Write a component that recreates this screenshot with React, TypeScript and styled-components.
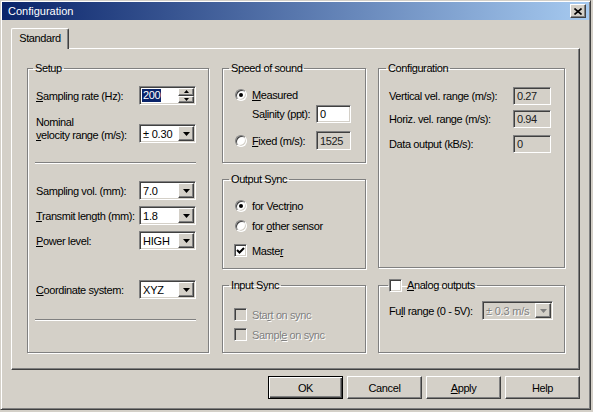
import React from "react";
import styled, { createGlobalStyle, css } from "styled-components";

const Global = createGlobalStyle`
  html, body {
    margin: 0;
    padding: 0;
    background: #d4d0c8;
  }
  body {
    font-family: "Liberation Sans", Arial, sans-serif;
    font-size: 11px;
    letter-spacing: -0.4px;
    color: #000;
  }
  * {
    box-sizing: border-box;
  }
`;

const sunken = css`
  border: 1px solid;
  border-color: #808080 #fff #fff #808080;
  box-shadow: inset 1px 1px #404040, inset -1px -1px #d4d0c8;
`;

const raised = css`
  border: 1px solid;
  border-color: #fff #404040 #404040 #fff;
  box-shadow: inset -1px -1px #808080;
  background: #d4d0c8;
`;

const Window = styled.div`
  width: 591px;
  height: 410px;
  background: #d4d0c8;
  border: 1px solid;
  border-color: #d4d0c8 #404040 #404040 #d4d0c8;
  box-shadow: inset 1px 1px #fff, inset -1px -1px #808080;
  padding: 1px;
  display: flex;
  flex-direction: column;
`;

const TitleBar = styled.div`
  height: 18px;
  display: flex;
  align-items: center;
  justify-content: space-between;
  padding: 0 3px 0 6px;
  background: linear-gradient(to right, #0a246a, #a6caf0);
  color: #fff;
  letter-spacing: 0;
`;

const CloseButton = styled.div`
  ${raised};
  width: 16px;
  height: 14px;
  display: flex;
  align-items: center;
  justify-content: center;
`;

const Body = styled.div`
  padding: 8px 9px 0 9px;
  display: flex;
  flex-direction: column;
`;

const TabStrip = styled.div`
  height: 20px;
  display: flex;
  align-items: flex-end;
`;

const Tab = styled.div`
  position: relative;
  z-index: 1;
  width: 58px;
  height: 21px;
  margin-bottom: -1px;
  padding-top: 3px;
  text-align: center;
  background: #d4d0c8;
  border-top: 1px solid #fff;
  border-left: 1px solid #fff;
  border-right: 1px solid #404040;
  border-radius: 2px 2px 0 0;
  box-shadow: inset -1px 0 #808080;
`;

const Panel = styled.div`
  height: 322px;
  border: 1px solid;
  border-color: #fff #404040 #404040 #fff;
  box-shadow: inset -1px -1px #808080;
  padding: 13px 0 0 15px;
  display: flex;
`;

const Column = styled.div<{ $w: number; $ml?: number }>`
  width: ${(p) => p.$w}px;
  margin-left: ${(p) => p.$ml ?? 0}px;
  display: flex;
  flex-direction: column;
`;

const Group = styled.fieldset<{ $h: number; $pl: number; $pr: number; $mt?: number }>`
  margin: ${(p) => p.$mt ?? 0}px 0 0 0;
  min-width: 0;
  height: ${(p) => p.$h}px;
  padding: 0 ${(p) => p.$pr}px 0 ${(p) => p.$pl}px;
  border: 1px solid #808080;
  box-shadow: inset 1px 1px #fff, 1px 1px 0 #fff;
`;

const Legend = styled.legend<{ $ml?: number }>`
  padding: 0 2px;
  margin-left: ${(p) => p.$ml ?? -3}px;
  height: 13px;
  line-height: 13px;
  display: flex;
  align-items: center;
  gap: 5px;
`;

const Row = styled.div<{ $mt: number; $h?: number; $pl?: number }>`
  margin-top: ${(p) => p.$mt}px;
  height: ${(p) => p.$h ?? 19}px;
  padding-left: ${(p) => p.$pl ?? 0}px;
  display: flex;
  align-items: center;
  justify-content: space-between;
`;

const StackLabel = styled.div`
  line-height: 13px;
  align-self: flex-end;
  margin-bottom: 1px;
`;

const Label = styled.span<{ $off?: boolean }>`
  flex: 1;
  white-space: nowrap;
  color: ${(p) => (p.$off ? "#808080" : "#000")};
  text-shadow: ${(p) => (p.$off ? "1px 1px 0 #fff" : "none")};
`;

const Key = styled.span`
  text-decoration: underline;
`;

const Slot = styled.span`
  width: 17px;
  flex: none;
  display: flex;
  align-items: center;
`;

const Separator = styled.div<{ $mt: number }>`
  margin: ${(p) => p.$mt}px 0 0 -1px;
  height: 2px;
  border-top: 1px solid #808080;
  border-bottom: 1px solid #fff;
`;

const Field = styled.div<{ $w: number; $h?: number; $ro?: boolean }>`
  ${sunken};
  width: ${(p) => p.$w}px;
  height: ${(p) => p.$h ?? 18}px;
  flex: none;
  background: ${(p) => (p.$ro ? "#d4d0c8" : "#fff")};
  color: ${(p) => (p.$ro ? "#202020" : "#000")};
  padding: 0 2px 0 3px;
  display: flex;
  align-items: center;
`;

const ComboBox = styled.div<{ $w: number; $off?: boolean }>`
  ${sunken};
  width: ${(p) => p.$w}px;
  height: 19px;
  flex: none;
  padding: 1px;
  display: flex;
  background: ${(p) => (p.$off ? "#d4d0c8" : "#fff")};
`;

const ComboText = styled.span<{ $off?: boolean }>`
  flex: 1;
  padding-left: 2px;
  display: flex;
  align-items: center;
  white-space: nowrap;
  letter-spacing: -0.2px;
  color: ${(p) => (p.$off ? "#808080" : "#000")};
  text-shadow: ${(p) => (p.$off ? "1px 1px 0 #fff" : "none")};
`;

const ArrowButton = styled.span`
  ${raised};
  width: 16px;
  height: 15px;
  display: flex;
  align-items: center;
  justify-content: center;
`;

const SpinBox = styled.div`
  ${sunken};
  width: 57px;
  height: 19px;
  padding: 1px 1px 1px 2px;
  display: flex;
  align-items: center;
  background: #fff;
`;

const Selected = styled.span`
  background: #0a246a;
  color: #fff;
  height: 13px;
  line-height: 13px;
  padding: 0 1px;
`;

const SpinButtons = styled.span`
  margin-left: auto;
  width: 16px;
  height: 15px;
  display: flex;
  flex-direction: column;
`;

const SpinHalf = styled.span`
  ${raised};
  flex: 1;
  display: flex;
  align-items: center;
  justify-content: center;
`;

const Radio = styled.span<{ $on?: boolean }>`
  width: 12px;
  height: 12px;
  border-radius: 50%;
  background: #fff;
  border: 1px solid;
  border-color: #808080 #fff #fff #808080;
  box-shadow: inset 1px 1px #404040, inset -1px -1px #d4d0c8;
  display: flex;
  align-items: center;
  justify-content: center;

  &::after {
    content: "";
    width: 4px;
    height: 4px;
    border-radius: 50%;
    background: #000;
    display: ${(p) => (p.$on ? "block" : "none")};
  }
`;

const Check = styled.span<{ $off?: boolean }>`
  ${sunken};
  width: 13px;
  height: 13px;
  flex: none;
  margin-left: -1px;
  background: ${(p) => (p.$off ? "#d4d0c8" : "#fff")};
  display: flex;
  align-items: center;
  justify-content: center;
`;

const ButtonRow = styled.div`
  margin-top: 6px;
  display: flex;
  justify-content: flex-end;
  gap: 4px;
`;

const Button = styled.div<{ $default?: boolean }>`
  width: 75px;
  height: 23px;
  display: flex;
  align-items: center;
  justify-content: center;
  background: #d4d0c8;
  border: 1px solid;
  border-color: ${(p) => (p.$default ? "#000" : "#fff #404040 #404040 #fff")};
  box-shadow: ${(p) =>
    p.$default
      ? "inset 1px 1px #fff, inset -1px -1px #404040, inset -2px -2px #808080"
      : "inset -1px -1px #808080"};
`;

function Arrow({ off }: { off?: boolean }) {
  return (
    <svg width="7" height="4" viewBox="0 0 7 4">
      <polygon points="0,0 7,0 3.5,4" fill={off ? "#808080" : "#000"} />
    </svg>
  );
}

function Combo({ value, w, off }: { value: string; w: number; off?: boolean }) {
  return (
    <ComboBox $w={w} $off={off}>
      <ComboText $off={off}>{value}</ComboText>
      <ArrowButton>
        <Arrow off={off} />
      </ArrowButton>
    </ComboBox>
  );
}

function Tick() {
  return (
    <svg width="9" height="9" viewBox="0 0 9 9">
      <polyline points="1,4 3.5,6.5 8,2" fill="none" stroke="#000" strokeWidth="2" />
    </svg>
  );
}

export default function App() {
  return (
    <>
      <Global />
      <Window>
        <TitleBar>
          <span>Configuration</span>
          <CloseButton>
            <svg width="8" height="7" viewBox="0 0 8 7">
              <path d="M0.5 0.5 L7.5 6.5 M7.5 0.5 L0.5 6.5" stroke="#000" strokeWidth="1.6" />
            </svg>
          </CloseButton>
        </TitleBar>
        <Body>
          <TabStrip>
            <Tab>Standard</Tab>
          </TabStrip>
          <Panel>
            <Column $w={182}>
              <Group $h={291} $pl={8} $pr={12}>
                <Legend>Setup</Legend>
                <Row $mt={11}>
                  <Label>
                    <Key>S</Key>ampling rate (Hz):
                  </Label>
                  <SpinBox>
                    <Selected>200</Selected>
                    <SpinButtons>
                      <SpinHalf>
                        <svg width="5" height="3" viewBox="0 0 5 3">
                          <polygon points="2.5,0 5,3 0,3" fill="#000" />
                        </svg>
                      </SpinHalf>
                      <SpinHalf>
                        <svg width="5" height="3" viewBox="0 0 5 3">
                          <polygon points="0,0 5,0 2.5,3" fill="#000" />
                        </svg>
                      </SpinHalf>
                    </SpinButtons>
                  </SpinBox>
                </Row>
                <Row $mt={12} $h={26}>
                  <StackLabel>
                    Nominal
                    <br />
                    <Key>v</Key>elocity range (m/s):
                  </StackLabel>
                  <div style={{ alignSelf: "flex-end" }}>
                    <Combo value="± 0.30" w={57} />
                  </div>
                </Row>
                <Separator $mt={19} />
                <Row $mt={17}>
                  <Label>Sampling vol. (mm):</Label>
                  <Combo value="7.0" w={57} />
                </Row>
                <Row $mt={6}>
                  <Label>
                    <Key>T</Key>ransmit length (mm):
                  </Label>
                  <Combo value="1.8" w={57} />
                </Row>
                <Row $mt={6}>
                  <Label>
                    <Key>P</Key>ower level:
                  </Label>
                  <Combo value="HIGH" w={57} />
                </Row>
                <Row $mt={30}>
                  <Label>
                    <Key>C</Key>oordinate system:
                  </Label>
                  <Combo value="XYZ" w={57} />
                </Row>
                <Separator $mt={20} />
              </Group>
            </Column>

            <Column $w={144} $ml={13}>
              <Group $h={101} $pl={9} $pr={14}>
                <Legend>Speed of sound</Legend>
                <Row $mt={13} $h={13} $pl={3}>
                  <Slot>
                    <Radio $on />
                  </Slot>
                  <Label>
                    <Key>M</Key>easured
                  </Label>
                </Row>
                <Row $mt={4} $h={18} $pl={3}>
                  <Slot />
                  <Label>
                    Sa<Key>l</Key>inity (ppt):
                  </Label>
                  <Field $w={35}>0</Field>
                </Row>
                <Row $mt={8} $h={19} $pl={3}>
                  <Slot>
                    <Radio />
                  </Slot>
                  <Label>
                    <Key>F</Key>ixed (m/s):
                  </Label>
                  <Field $w={35} $h={19} $ro>
                    1525
                  </Field>
                </Row>
              </Group>

              <Group $h={96} $pl={9} $pr={14} $mt={10}>
                <Legend>Output Sync</Legend>
                <Row $mt={13} $h={13} $pl={3}>
                  <Slot>
                    <Radio $on />
                  </Slot>
                  <Label>
                    for Vectr<Key>i</Key>no
                  </Label>
                </Row>
                <Row $mt={7} $h={13} $pl={3}>
                  <Slot>
                    <Radio />
                  </Slot>
                  <Label>
                    for <Key>o</Key>ther sensor
                  </Label>
                </Row>
                <Row $mt={12} $h={13} $pl={3}>
                  <Slot>
                    <Check>
                      <Tick />
                    </Check>
                  </Slot>
                  <Label>
                    Maste<Key>r</Key>
                  </Label>
                </Row>
              </Group>

              <Group $h={74} $pl={9} $pr={14} $mt={10}>
                <Legend>Input Sync</Legend>
                <Row $mt={16} $h={13} $pl={3}>
                  <Slot>
                    <Check $off />
                  </Slot>
                  <Label $off>
                    Sta<Key>r</Key>t on sync
                  </Label>
                </Row>
                <Row $mt={7} $h={13} $pl={3}>
                  <Slot>
                    <Check $off />
                  </Slot>
                  <Label $off>
                    Sampl<Key>e</Key> on sync
                  </Label>
                </Row>
              </Group>
            </Column>

            <Column $w={187} $ml={12}>
              <Group $h={206} $pl={10} $pr={13}>
                <Legend>Configuration</Legend>
                <Row $mt={12} $h={18}>
                  <Label>Vertical vel. range (m/s):</Label>
                  <Field $w={38} $ro>
                    0.27
                  </Field>
                </Row>
                <Row $mt={5} $h={18}>
                  <Label>Horiz. vel. range (m/s):</Label>
                  <Field $w={38} $ro>
                    0.94
                  </Field>
                </Row>
                <Row $mt={7} $h={18}>
                  <Label>Data output (kB/s):</Label>
                  <Field $w={38} $ro>
                    0
                  </Field>
                </Row>
              </Group>

              <Group $h={74} $pl={10} $pr={11} $mt={11}>
                <Legend $ml={-1}>
                  <Check />
                  <span>
                    <Key>A</Key>nalog outputs
                  </span>
                </Legend>
                <Row $mt={9}>
                  <Label>
                    Fu<Key>l</Key>l range (0 - 5V):
                  </Label>
                  <Combo value="± 0.3 m/s" w={71} off />
                </Row>
              </Group>
            </Column>
          </Panel>

          <ButtonRow>
            <Button $default>OK</Button>
            <Button>Cancel</Button>
            <Button>
              <span>
                <Key>A</Key>pply
              </span>
            </Button>
            <Button>Help</Button>
          </ButtonRow>
        </Body>
      </Window>
    </>
  );
}
